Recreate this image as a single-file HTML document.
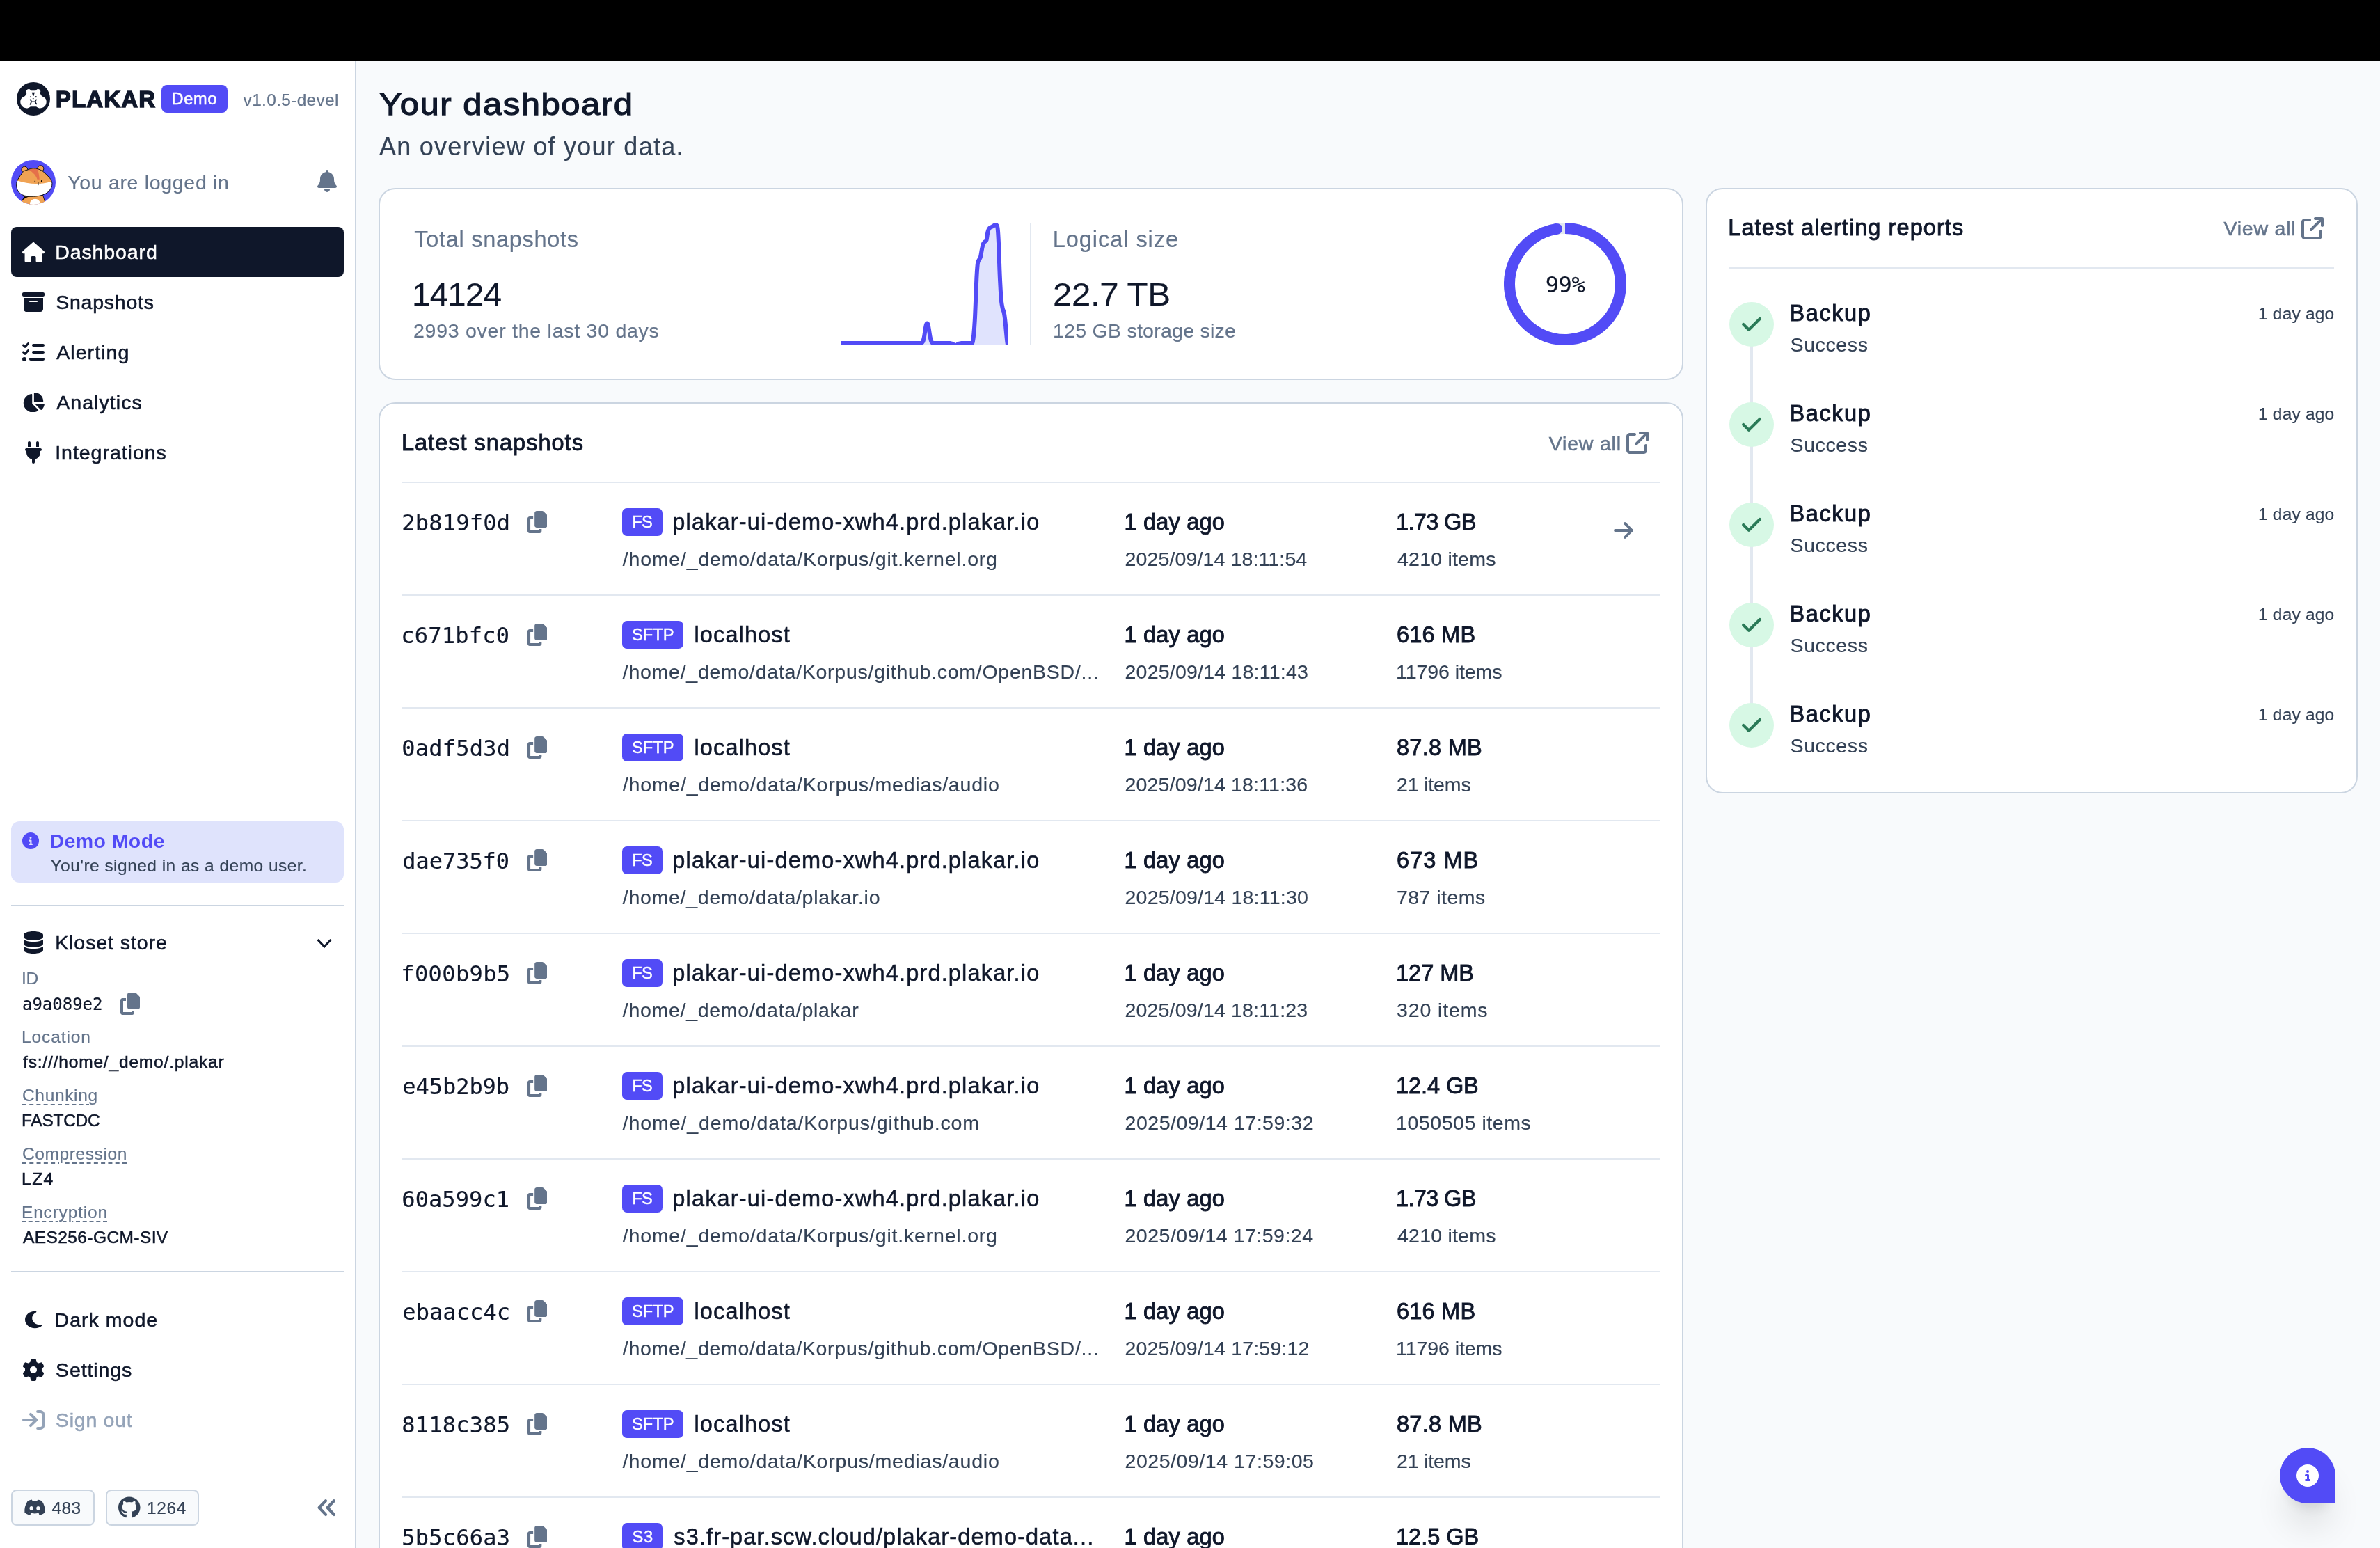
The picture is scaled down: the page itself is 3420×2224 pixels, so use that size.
<!DOCTYPE html>
<html lang="en"><head><meta charset="utf-8"><title>Plakar - Your dashboard</title>
<style>
*{margin:0;padding:0}
html,body{width:3420px;height:2224px;overflow:hidden}
body{position:relative;background:#f8fafc;font-family:"Liberation Sans", Arial, sans-serif;color:#0f172a}
.a{position:absolute;display:block}
aside,main{display:block;position:absolute;left:0;top:0;width:3420px;height:0;will-change:transform}
.t{position:absolute;display:block;white-space:nowrap;line-height:1;font-weight:400;text-decoration:none}
.m{font-family:"DejaVu Sans Mono", "Liberation Mono", monospace}
.dash{text-decoration:underline dashed #64748b 2px;text-underline-offset:5px}
@media (min-resolution:2dppx){html{zoom:.5}}
</style></head>
<body>
<div class="a" style="left:0;top:0;width:3420px;height:87px;background:#000"></div>
<div class="a" style="left:0;top:87px;width:3420px;height:1px;background:#fff"></div>
<aside>
<div class="a" style="left:0;top:87px;width:510px;height:2137px;background:#fff;border-right:2px solid #cbd5e1"></div>
<svg class="a" style="left:24px;top:118px" width="48" height="48" viewBox="0 0 48 48">
<circle cx="24" cy="24" r="24" fill="#0f172a"/>
<path fill="#fff" d="M14.6 15.6C13.3 14.4 13.4 12 15 10.8c1.600-1.200 3.700-.8 4.800.6.800 1 1.900.9 4.200.9s3.400.1 4.200-.9c1.100-1.400 3.200-1.800 4.800-.6 1.600 1.200 1.700 3.600.4 4.800.9 1.700 1.500 3.400 2.700 4.300 1.500 1 3.600 1.600 5.100 3.600 1.500 2 1.900 4.700 1.200 7.200-.8 3-3.200 5.600-6.400 6.400-2.600.7-5.100.1-6.900-1.200-.7-.5-1.300-.6-2.600-.6h-5c-1.300 0-1.900.1-2.600.6-1.800 1.300-4.300 1.900-6.900 1.200-3.200-.8-5.600-3.400-6.400-6.400-.7-2.500-.3-5.200 1.200-7.200 1.500-2 3.600-2.600 5.100-3.600 1.200-.9 1.800-2.600 2.700-4.300z"/>
<path fill="#0f172a" d="M21.800 14.700h4.100l-1.500 5.200h-1.100z"/>
<ellipse cx="20.100" cy="21.100" rx=".9" ry="1.200" fill="#0f172a"/><ellipse cx="27.800" cy="21.100" rx=".9" ry="1.200" fill="#0f172a"/>
<path fill="#0f172a" d="M22.500 23.200h2.600l-1.300 1.500z"/>
<path fill="none" stroke="#0f172a" stroke-width="1.600" stroke-linecap="round" d="M19.400 25.300c1.400.8 1.700 2.300 1.500 3.400-.2 1.300-1 2.500-1.500 3.200M28.300 25.300c-1.300.8-1.600 2.300-1.400 3.400.2 1.200.9 2.100 1.500 2.700M20.900 28.300h6"/>
</svg>
<div class="a" style="left:232px;top:122px;width:95px;height:40px;background:#524bf6;border-radius:8px;"></div>
<svg class="a" style="left:16px;top:230px" width="64" height="64" viewBox="0 0 64 64">
<defs><clipPath id="av"><circle cx="32" cy="32" r="32"/></clipPath><clipPath id="hd"><path d="M23.300 14.200c2.900-1.400 6-2.200 9-2.300 2.200-.1 4.300.3 6.200.9 2.300.7 4.400 1.500 6.200 2.700 2.400 1.800 4.600 3.900 6.700 6 2 2 3.900 3.600 5.200 5.700 1.300 2 2.200 4 2.300 6.200.1 2.200-.4 4.300-1.300 6.200-1 2.300-2.600 4.400-4.600 6.200-2.200 1.900-4.900 3.100-7.800 4.200-2.600.9-5.300 1.500-8.300 1.900-2.900.4-5.900.5-8.700.4-3-.1-6-.3-8.800-1.200-2.200-.7-4.100-1.700-5.700-2.800-2-1.500-3.600-3.400-4.600-5.700-.9-2.100-1.500-4.400-1.600-6.800 0-3 1.100-6 2.600-8.600 1.700-3 3.800-6 6.200-9.300 1.800-2 3.800-3.500 7-3.700z"/></clipPath></defs>
<g clip-path="url(#av)"><rect width="64" height="64" fill="#524bf6"/>
<path d="M15 59.500 19.500 52l10-.8 16-1.200 3.300 10.500V66H12z" fill="#f0a354" stroke="#000" stroke-width=".8"/>
<path d="M15.300 58.700 19 52.600l9.500-.6c-5 .6-10 3-13.200 6.700z" fill="#000"/>
<ellipse cx="34.400" cy="62.300" rx="7.400" ry="6.500" fill="#fff"/>
<circle cx="19.400" cy="13.700" r="4.400" fill="#f0a354" stroke="#000" stroke-width=".9"/>
<circle cx="42.400" cy="12.200" r="4.400" fill="#f0a354" stroke="#000" stroke-width=".9"/>
<path d="M23.300 14.200c2.900-1.400 6-2.200 9-2.300 2.200-.1 4.300.3 6.200.9 2.300.7 4.400 1.500 6.200 2.700 2.400 1.800 4.600 3.900 6.700 6 2 2 3.900 3.600 5.200 5.700 1.300 2 2.200 4 2.300 6.200.1 2.200-.4 4.300-1.300 6.200-1 2.300-2.600 4.400-4.600 6.200-2.200 1.900-4.900 3.100-7.800 4.200-2.600.9-5.300 1.500-8.300 1.900-2.900.4-5.900.5-8.700.4-3-.1-6-.3-8.800-1.200-2.200-.7-4.100-1.700-5.700-2.800-2-1.500-3.600-3.400-4.600-5.700-.9-2.100-1.500-4.400-1.600-6.800 0-3 1.100-6 2.600-8.600 1.700-3 3.800-6 6.200-9.300 1.800-2 3.800-3.500 7-3.700z" fill="#fff"/>
<g clip-path="url(#hd)"><path d="M0 0H64V28.500C57 31.500 49 33.300 41 33.800 30 34.500 19 32.800 8 29.200z" fill="#f0a354"/>
<path d="M25.600 14.200c4-1.600 8.400-1.800 12.400-1.400 1.400 4.900 2.400 9.900 2.800 14.900h-3.300c-1.300-5.200-5.900-10.100-11.900-13.500z" fill="#e5704a"/></g>
<path d="M23.300 14.200c2.900-1.400 6-2.200 9-2.300 2.200-.1 4.300.3 6.200.9 2.300.7 4.400 1.500 6.200 2.700 2.400 1.800 4.600 3.900 6.700 6 2 2 3.900 3.600 5.200 5.700 1.300 2 2.200 4 2.300 6.200.1 2.200-.4 4.300-1.300 6.200-1 2.300-2.600 4.400-4.600 6.200-2.200 1.900-4.900 3.100-7.800 4.200-2.600.9-5.300 1.500-8.300 1.900-2.900.4-5.900.5-8.700.4-3-.1-6-.3-8.800-1.200-2.200-.7-4.100-1.700-5.700-2.800-2-1.500-3.600-3.400-4.600-5.700-.9-2.100-1.500-4.400-1.600-6.800 0-3 1.100-6 2.600-8.600 1.700-3 3.800-6 6.200-9.300 1.800-2 3.800-3.500 7-3.700z" fill="none" stroke="#000" stroke-width=".9"/>
<ellipse cx="34.300" cy="30.700" rx=".75" ry="1.500" fill="#000"/><ellipse cx="43.700" cy="30.200" rx=".75" ry="1.500" fill="#000"/>
<path d="M38.600 31.400h1.700l-.8 1.100z" fill="#000"/><path d="M37.300 34.300c.8.300 1.600.4 2.500.3 1 0 1.800-.3 2.700-.6M39.700 32.500c0 1.300-.1 2.600-.6 3.700" fill="none" stroke="#000" stroke-width=".5"/>
</g></svg>
<svg class="a" style="left:456px;top:244px" width="28" height="32" viewBox="0 0 448 512" preserveAspectRatio="none"><path fill="#64748b" d="M224 0c-17.700 0-32 14.300-32 32V51.200C119 66 64 130.600 64 208v18.800c0 47-17.300 92.400-48.500 127.600l-7.400 8.300c-8.400 9.400-10.400 22.900-5.300 34.400S19.400 416 32 416H416c12.600 0 24-7.400 29.200-18.900s3.100-25-5.300-34.400l-7.400-8.300C401.300 319.200 384 273.900 384 226.800V208c0-77.400-55-142-128-156.800V32c0-17.700-14.300-32-32-32zm45.300 493.300c12-12 18.700-28.300 18.700-45.300H224 160c0 17 6.700 33.300 18.700 45.300s28.300 18.700 45.300 18.700s33.300-6.700 45.300-18.700z"/></svg>
<div class="a" style="left:16px;top:326px;width:478px;height:72px;background:#0f172a;border-radius:8px;"></div>
<svg class="a" style="left:32.0px;top:347.5px" width="32" height="29" viewBox="0 0 576 512" preserveAspectRatio="none"><path fill="#ffffff" d="M575.8 255.5c0 18-15 32.100-32 32.100h-32l.7 160.200c0 2.700-.2 5.400-.5 8.100V472c0 22.100-17.900 40-40 40H456c-1.100 0-2.200 0-3.300-.1c-1.400 .1-2.800 .1-4.200 .1H416 392c-22.100 0-40-17.900-40-40V448 384c0-17.700-14.300-32-32-32H256c-17.700 0-32 14.300-32 32v64 24c0 22.100-17.900 40-40 40H160 128.100c-1.500 0-3-.1-4.500-.2c-1.200 .1-2.400 .2-3.600 .2H104c-22.100 0-40-17.900-40-40V360c0-.9 0-1.900 .1-2.800V287.600H32c-18 0-32-14-32-32.100c0-9 3-17 10-24L266.400 8c7-7 15-8 22-8s15 2 21.100 7L564.800 231.500c8 7 12 15 11 24z"/></svg>
<svg class="a" style="left:32.0px;top:418.0px" width="32" height="32" viewBox="0 0 512 512" preserveAspectRatio="none"><path fill="#0f172a" d="M32 32H480c17.700 0 32 14.300 32 32V96c0 17.700-14.300 32-32 32H32C14.300 128 0 113.700 0 96V64C0 46.300 14.300 32 32 32zm0 128H480V416c0 35.300-28.700 64-64 64H96c-35.300 0-64-28.700-64-64V160zm128 80c0 8.800 7.200 16 16 16H336c8.800 0 16-7.200 16-16s-7.200-16-16-16H176c-8.800 0-16 7.200-16 16z"/></svg>
<svg class="a" style="left:32.0px;top:490.0px" width="32" height="32" viewBox="0 0 512 512" preserveAspectRatio="none"><path fill="#0f172a" d="M152.100 38.200c9.900 8.900 10.700 24 1.800 33.900l-72 80c-4.400 4.900-10.600 7.800-17.200 7.900s-12.900-2.400-17.600-7L7 113C-2.300 103.600-2.300 88.400 7 79s24.600-9.400 33.900 0l22.100 22.100 55.100-61.200c8.900-9.900 24-10.700 33.900-1.800zm0 160c9.900 8.900 10.700 24 1.800 33.900l-72 80c-4.400 4.900-10.600 7.800-17.200 7.900s-12.900-2.400-17.600-7L7 273c-9.400-9.400-9.400-24.600 0-33.900s24.600-9.400 33.900 0l22.100 22.100 55.100-61.200c8.900-9.900 24-10.700 33.900-1.800zM224 96c0-17.700 14.300-32 32-32H480c17.700 0 32 14.300 32 32s-14.300 32-32 32H256c-17.700 0-32-14.300-32-32zm0 160c0-17.700 14.300-32 32-32H480c17.700 0 32 14.300 32 32s-14.300 32-32 32H256c-17.700 0-32-14.300-32-32zM160 416c0-17.700 14.300-32 32-32H480c17.700 0 32 14.300 32 32s-14.300 32-32 32H192c-17.700 0-32-14.300-32-32zM48 368a48 48 0 1 1 0 96 48 48 0 1 1 0-96z"/></svg>
<svg class="a" style="left:32px;top:563.78px" width="32" height="28.44" viewBox="0 0 576 512" preserveAspectRatio="none"><path fill="#0f172a" d="M304 240V16.600c0-9 7-16.600 16-16.600C443.700 0 544 100.300 544 224c0 9-7.600 16-16.600 16H304zM32 272C32 150.700 122.100 50.300 239 34.300c9.200-1.300 17 6.100 17 15.400V288L412.500 444.500c6.700 6.700 6.200 17.700-1.500 23.100C371.800 495.600 323.800 512 272 512C139.500 512 32 404.600 32 272zm526.400 16c9.300 0 16.600 7.800 15.400 17c-7.700 55.900-34.600 105.600-73.900 142.300c-6 5.600-15.400 5.200-21.200-.7L320 288H558.400z"/></svg>
<svg class="a" style="left:36.0px;top:634.0px" width="24" height="32" viewBox="0 0 384 512" preserveAspectRatio="none"><path fill="#0f172a" d="M96 0C78.300 0 64 14.300 64 32v96h64V32c0-17.700-14.300-32-32-32zM288 0c-17.700 0-32 14.300-32 32v96h64V32c0-17.700-14.300-32-32-32zM32 160c-17.700 0-32 14.300-32 32s14.300 32 32 32v32c0 77.400 55 142 128 156.800V480c0 17.700 14.300 32 32 32s32-14.300 32-32V412.800C297 398 352 333.400 352 256V224c17.700 0 32-14.300 32-32s-14.300-32-32-32H32z"/></svg>
<div class="a" style="left:16px;top:1180px;width:478px;height:88px;background:#dfe3fc;border-radius:12px;"></div>
<svg class="a" style="left:32px;top:1196px" width="24" height="24" viewBox="0 0 512 512" preserveAspectRatio="none"><path fill="#524bf6" d="M256 512A256 256 0 1 0 256 0a256 256 0 1 0 0 512zM216 336h24V272H216c-13.300 0-24-10.700-24-24s10.700-24 24-24h48c13.300 0 24 10.700 24 24v88h8c13.300 0 24 10.700 24 24s-10.700 24-24 24H216c-13.300 0-24-10.700-24-24s10.700-24 24-24zm40-208a32 32 0 1 1 0 64 32 32 0 1 1 0-64z"/></svg>
<div class="a" style="left:16px;top:1300px;width:478px;height:2px;background:#cbd5e1;"></div>
<svg class="a" style="left:34px;top:1338px" width="28" height="32" viewBox="0 0 448 512" preserveAspectRatio="none"><path fill="#0f172a" d="M448 80v48c0 44.200-100.300 80-224 80S0 172.200 0 128V80C0 35.800 100.300 0 224 0S448 35.800 448 80zM393.200 214.700c20.800-7.400 39.900-16.900 54.800-28.600V288c0 44.200-100.300 80-224 80S0 332.200 0 288V186.100c14.900 11.800 34 21.200 54.800 28.600C99.700 230.700 159.500 240 224 240s124.300-9.300 169.200-25.300zM0 346.100c14.900 11.800 34 21.200 54.800 28.600C99.700 390.700 159.500 400 224 400s124.300-9.300 169.200-25.300c20.800-7.400 39.900-16.900 54.800-28.600V432c0 44.200-100.300 80-224 80S0 476.200 0 432V346.100z"/></svg>
<svg class="a" style="left:446px;top:1340px" width="40" height="30" viewBox="0 0 40 30" fill="none" stroke="#0f172a" stroke-width="3" stroke-linecap="butt" stroke-linejoin="miter"><path d="M10.500 10 20 20 29.500 10"/></svg>
<svg class="a" style="left:173px;top:1426px" width="28" height="32" viewBox="0 0 448 512" preserveAspectRatio="none"><path fill="#64748b" d="M208 0H332.100c12.700 0 24.900 5.100 33.900 14.100l67.900 67.900c9 9 14.100 21.200 14.100 33.900V336c0 26.500-21.500 48-48 48H208c-26.500 0-48-21.500-48-48V48c0-26.500 21.500-48 48-48zM48 128h80v64H64V448H256V416h64v48c0 26.500-21.500 48-48 48H48c-26.500 0-48-21.500-48-48V176c0-26.500 21.500-48 48-48z"/></svg>
<div class="a" style="left:16px;top:1826px;width:478px;height:2px;background:#cbd5e1;"></div>
<svg class="a" style="left:36px;top:1882px" width="24.5" height="28" viewBox="0 0 384 512" preserveAspectRatio="none"><path fill="#0f172a" d="M223.500 32C100 32 0 132.300 0 256S100 480 223.500 480c60.600 0 115.500-24.200 155.800-63.400c5-4.900 6.300-12.500 3.100-18.700s-10.100-9.700-17-8.500c-9.800 1.700-19.800 2.600-30.100 2.600c-96.900 0-175.500-78.800-175.500-176c0-65.800 36-123.100 89.300-153.300c6.100-3.500 9.200-10.500 7.700-17.300s-7.300-11.900-14.300-12.500c-6.300-.5-12.600-.8-19-.8z"/></svg>
<svg class="a" style="left:32px;top:1952px" width="32" height="32" viewBox="0 0 512 512" preserveAspectRatio="none"><path fill="#0f172a" d="M495.900 166.600c3.200 8.700 .5 18.400-6.400 24.600l-43.300 39.400c1.100 8.300 1.700 16.800 1.700 25.400s-.6 17.100-1.700 25.400l43.300 39.400c6.900 6.200 9.600 15.900 6.400 24.600c-4.400 11.900-9.700 23.300-15.800 34.300l-4.700 8.100c-6.600 11-14 21.400-22.100 31.200c-5.900 7.200-15.700 9.600-24.500 6.800l-55.700-17.700c-13.400 10.300-28.200 18.900-44 25.400l-12.500 57.100c-2 9.100-9 16.300-18.200 17.800c-13.800 2.300-28 3.500-42.500 3.500s-28.700-1.200-42.500-3.500c-9.200-1.500-16.200-8.700-18.200-17.800l-12.500-57.100c-15.800-6.500-30.600-15.100-44-25.400L83.100 425.900c-8.800 2.800-18.600 .3-24.500-6.800c-8.100-9.800-15.500-20.200-22.100-31.200l-4.700-8.100c-6.100-11-11.400-22.400-15.800-34.300c-3.200-8.700-.5-18.400 6.400-24.600l43.300-39.400C64.600 273.100 64 264.600 64 256s.6-17.100 1.700-25.400L22.400 191.200c-6.900-6.200-9.600-15.900-6.400-24.600c4.400-11.900 9.700-23.300 15.800-34.300l4.700-8.100c6.600-11 14-21.400 22.100-31.200c5.900-7.200 15.700-9.600 24.500-6.800l55.700 17.700c13.400-10.300 28.200-18.900 44-25.400l12.500-57.100c2-9.100 9-16.300 18.200-17.800C227.300 1.200 241.500 0 256 0s28.700 1.200 42.500 3.500c9.200 1.500 16.200 8.700 18.200 17.800l12.500 57.100c15.800 6.500 30.600 15.100 44 25.400l55.700-17.700c8.800-2.800 18.600-.3 24.500 6.800c8.100 9.800 15.500 20.200 22.100 31.200l4.700 8.100c6.100 11 11.400 22.400 15.800 34.300zM256 336a80 80 0 1 0 0-160 80 80 0 1 0 0 160z"/></svg>
<svg class="a" style="left:28px;top:2020px" width="40" height="40" viewBox="0 0 40 40" fill="none" stroke="#94a3b8" stroke-width="4" stroke-linecap="round" stroke-linejoin="round"><path d="M6 20H24.200"/><path d="M16 11.900 24.200 20 16 28.200"/><path d="M26.100 8H30.200a4 4 0 0 1 4 4V28a4 4 0 0 1-4 4H26.100"/></svg>
<div class="a" style="left:16px;top:2140px;width:120px;height:52px;background:#f8fafc;border-radius:8px;border:2px solid #cbd5e1;box-sizing:border-box;"></div>
<svg class="a" style="left:33.5px;top:2153px" width="32" height="25.6" viewBox="0 0 640 512" preserveAspectRatio="none"><path fill="#334155" d="M524.531,69.836a1.500,1.500,0,0,0-.764-.7A485.065,485.065,0,0,0,404.081,32.030a1.816,1.816,0,0,0-1.923.910,337.461,337.461,0,0,0-14.900,30.600,447.848,447.848,0,0,0-134.426,0,309.541,309.541,0,0,0-15.135-30.600,1.890,1.890,0,0,0-1.924-.910A483.689,483.689,0,0,0,116.085,69.137a1.712,1.712,0,0,0-.788.676C39.068,183.651,18.186,294.690,28.430,404.354a2.016,2.016,0,0,0,.765,1.375A487.666,487.666,0,0,0,176.020,479.918a1.900,1.900,0,0,0,2.063-.676A348.200,348.200,0,0,0,208.120,430.400a1.860,1.860,0,0,0-1.019-2.588,321.173,321.173,0,0,1-45.868-21.853,1.885,1.885,0,0,1-.185-3.126c3.082-2.309,6.166-4.711,9.109-7.137a1.819,1.819,0,0,1,1.900-.256c96.229,43.917,200.410,43.917,295.500,0a1.812,1.812,0,0,1,1.924.233c2.944,2.426,6.027,4.851,9.132,7.160a1.884,1.884,0,0,1-.162,3.126,301.407,301.407,0,0,1-45.890,21.830,1.875,1.875,0,0,0-1,2.611,391.055,391.055,0,0,0,30.014,48.815,1.864,1.864,0,0,0,2.063.7A486.048,486.048,0,0,0,610.700,405.729a1.882,1.882,0,0,0,.765-1.352C623.729,277.594,590.933,167.465,524.531,69.836ZM222.491,337.580c-28.972,0-52.844-26.587-52.844-59.239S193.056,219.100,222.491,219.100c29.665,0,53.306,26.820,52.843,59.239C275.334,310.993,251.924,337.580,222.491,337.580Zm195.380,0c-28.971,0-52.843-26.587-52.843-59.239S388.437,219.100,417.871,219.100c29.667,0,53.307,26.820,52.844,59.239C470.715,310.993,447.538,337.580,417.871,337.580Z"/></svg>
<div class="a" style="left:152px;top:2140px;width:134px;height:52px;background:#f8fafc;border-radius:8px;border:2px solid #cbd5e1;box-sizing:border-box;"></div>
<svg class="a" style="left:170px;top:2150px" width="31.5" height="31.5" viewBox="0 0 496 512" preserveAspectRatio="none"><path fill="#334155" d="M244.800 8C106.100 8 0 113.300 0 252c0 110.900 69.800 205.800 169.500 239.200 12.800 2.300 17.300-5.600 17.300-12.100 0-6.200-.3-40.400-.3-61.400 0 0-70 15-84.700-29.800 0 0-11.400-29.100-27.800-36.600 0 0-22.900-15.700 1.600-15.400 0 0 24.900 2 38.600 25.800 21.900 38.600 58.600 27.500 72.900 20.900 2.300-16 8.800-27.100 16-33.700-55.900-6.200-112.300-14.300-112.300-110.500 0-27.500 7.600-41.300 23.600-58.900-2.600-6.500-11.100-33.300 2.600-67.900 20.900-6.500 69 27 69 27 20-5.600 41.500-8.500 62.800-8.500s42.800 2.900 62.800 8.500c0 0 48.100-33.600 69-27 13.700 34.700 5.200 61.400 2.600 67.900 16 17.700 25.800 31.500 25.800 58.900 0 96.500-58.900 104.200-114.800 110.500 9.200 7.900 17 22.900 17 46.400 0 33.700-.3 75.400-.3 83.600 0 6.500 4.600 14.400 17.300 12.100C428.200 457.800 496 362.900 496 252 496 113.300 383.500 8 244.800 8z"/></svg>
<svg class="a" style="left:450px;top:2146px" width="40" height="40" viewBox="0 0 40 40" fill="none" stroke="#64748b" stroke-width="4.2" stroke-linecap="round" stroke-linejoin="round"><path d="M18 10.200 8.600 20 18 29.900"/><path d="M29.900 10.200 20.600 20 29.900 29.900"/></svg>
<div class="t" style="left:80.1px;top:126.7px;font-size:32.5px;color:#0f172a;letter-spacing:1.49px;font-weight:700;-webkit-text-stroke:1.6px;">PLAKAR</div>
<div class="t" style="left:246.5px;top:131px;font-size:23.5px;color:#ffffff;letter-spacing:0.79px;-webkit-text-stroke:0.55px;">Demo</div>
<div class="t" style="left:349.6px;top:132px;font-size:24.5px;color:#64748b;letter-spacing:0.31px;-webkit-text-stroke:0.2px;">v1.0.5-devel</div>
<div class="t" style="left:97.2px;top:247.8px;font-size:28.5px;color:#64748b;letter-spacing:0.68px;-webkit-text-stroke:0.2px;">You are logged in</div>
<a href="#" class="t" style="left:79.2px;top:348px;font-size:28.5px;color:#ffffff;letter-spacing:0.89px;-webkit-text-stroke:0.55px;">Dashboard</a>
<a href="#" class="t" style="left:80.2px;top:420px;font-size:28.5px;color:#0f172a;letter-spacing:0.77px;-webkit-text-stroke:0.55px;">Snapshots</a>
<a href="#" class="t" style="left:81.2px;top:492px;font-size:28.5px;color:#0f172a;letter-spacing:1.07px;-webkit-text-stroke:0.55px;">Alerting</a>
<a href="#" class="t" style="left:81.2px;top:564px;font-size:28.5px;color:#0f172a;letter-spacing:1.06px;-webkit-text-stroke:0.55px;">Analytics</a>
<a href="#" class="t" style="left:79.2px;top:636px;font-size:28.5px;color:#0f172a;letter-spacing:0.97px;-webkit-text-stroke:0.55px;">Integrations</a>
<div class="t" style="left:71.5px;top:1194.2px;font-size:28.5px;color:#524bf6;letter-spacing:0.42px;font-weight:700;">Demo Mode</div>
<div class="t" style="left:72.5px;top:1231.8px;font-size:24.5px;color:#334155;letter-spacing:0.47px;-webkit-text-stroke:0.2px;">You're signed in as a demo user.</div>
<div class="t" style="left:79.2px;top:1340.2px;font-size:28.5px;color:#0f172a;letter-spacing:0.92px;-webkit-text-stroke:0.55px;">Kloset store</div>
<div class="t" style="left:31px;top:1393.8px;font-size:24.5px;color:#64748b;letter-spacing:-0.31px;-webkit-text-stroke:0.2px;">ID</div>
<div class="t m" style="left:32px;top:1430.8px;font-size:24px;color:#0f172a;letter-spacing:-0.02px;-webkit-text-stroke:0.2px;">a9a089e2</div>
<div class="t" style="left:31px;top:1477.8px;font-size:24.5px;color:#64748b;letter-spacing:0.9px;-webkit-text-stroke:0.2px;">Location</div>
<div class="t" style="left:33px;top:1514px;font-size:24.5px;color:#0f172a;letter-spacing:0.83px;-webkit-text-stroke:0.55px;">fs:///home/_demo/.plakar</div>
<div class="t dash" style="left:32px;top:1561.8px;font-size:24.5px;color:#64748b;letter-spacing:0.66px;-webkit-text-stroke:0.2px;">Chunking</div>
<div class="t" style="left:31px;top:1598px;font-size:24.5px;color:#0f172a;letter-spacing:-0.27px;-webkit-text-stroke:0.55px;">FASTCDC</div>
<div class="t dash" style="left:32px;top:1645.8px;font-size:24.5px;color:#64748b;letter-spacing:0.6px;-webkit-text-stroke:0.2px;">Compression</div>
<div class="t" style="left:31px;top:1682px;font-size:24.5px;color:#0f172a;letter-spacing:1.5px;-webkit-text-stroke:0.55px;">LZ4</div>
<div class="t dash" style="left:31px;top:1729.8px;font-size:24.5px;color:#64748b;letter-spacing:0.81px;-webkit-text-stroke:0.2px;">Encryption</div>
<div class="t" style="left:33px;top:1766px;font-size:24.5px;color:#0f172a;letter-spacing:0.41px;-webkit-text-stroke:0.55px;">AES256-GCM-SIV</div>
<div class="t" style="left:78.6px;top:1882.2px;font-size:28.5px;color:#0f172a;letter-spacing:1.02px;-webkit-text-stroke:0.55px;">Dark mode</div>
<div class="t" style="left:80px;top:1954.2px;font-size:28.5px;color:#0f172a;letter-spacing:0.9px;-webkit-text-stroke:0.55px;">Settings</div>
<div class="t" style="left:80px;top:2026.2px;font-size:28.5px;color:#94a3b8;letter-spacing:0.73px;-webkit-text-stroke:0.55px;">Sign out</div>
<div class="t" style="left:74.4px;top:2155px;font-size:24.5px;color:#334155;letter-spacing:0.37px;-webkit-text-stroke:0.2px;">483</div>
<div class="t" style="left:211px;top:2155px;font-size:24.5px;color:#334155;letter-spacing:0.61px;-webkit-text-stroke:0.2px;">1264</div>
</aside>
<main>
<div class="a" style="left:544px;top:270px;width:1875px;height:276px;border-radius:24px;background:#fff;border:2px solid #cbd5e1;box-sizing:border-box;"></div>
<svg class="a" style="left:1208px;top:320px" width="240" height="176" viewBox="0 0 240 176"><path d="M0 173C17.5 173.0 86.7 173.0 105 173C123.3 173.0 108.7 173.0 110 173C111.3 173.0 112.1 173.0 113 173C113.9 173.0 114.7 173.3 115.5 173C116.3 172.7 117.3 172.3 118 171C118.7 169.7 119.2 167.8 119.8 165C120.4 162.2 121.0 157.1 121.5 154C122.0 150.9 122.5 148.1 123 146.5C123.5 144.9 123.9 144.5 124.3 144.5C124.7 144.5 125.1 144.9 125.6 146.5C126.0 148.1 126.5 150.9 127 154C127.5 157.1 128.2 162.2 128.8 165C129.4 167.8 129.8 169.7 130.5 171C131.2 172.3 132.2 172.7 133 173C133.8 173.3 134.5 173.0 135.5 173C136.5 173.0 137.4 173.0 139 173C140.6 173.0 143.2 173.0 145 173C146.8 173.0 148.5 173.0 150 173C151.5 173.0 152.8 173.0 154 173C155.2 173.0 155.8 172.8 157 173C158.2 173.2 159.7 173.3 161 174C162.3 174.7 163.7 177.0 165 177C166.3 177.0 167.6 174.7 169 174C170.4 173.3 172.2 173.2 173.5 173C174.8 172.8 175.6 173.0 177 173C178.4 173.0 180.5 173.0 182 173C183.5 173.0 185.0 173.0 186 173C187.0 173.0 187.4 173.2 188 173C188.6 172.8 189.1 173.7 189.7 171.5C190.2 169.3 190.8 165.2 191.3 160C191.8 154.8 192.3 148.7 192.8 140C193.3 131.3 193.7 118.8 194.2 108C194.7 97.2 195.1 83.3 195.6 75C196.1 66.7 196.4 61.7 197 58C197.6 54.3 198.3 54.5 199 53C199.7 51.5 200.3 51.5 201 49C201.7 46.5 202.3 41.2 203 38C203.7 34.8 204.3 31.8 205 30C205.7 28.2 206.2 28.3 207 27.5C207.8 26.7 208.8 27.4 209.5 25C210.2 22.6 210.8 15.9 211.5 13C212.2 10.1 213.1 8.7 214 7.5C214.9 6.3 216.1 6.5 217 6C217.9 5.5 218.6 5.0 219.5 4.5C220.4 4.0 221.4 3.2 222.3 3.2C223.2 3.2 224.2 3.0 224.8 4.5C225.4 6.0 225.6 7.1 226 12C226.4 16.9 226.8 24.7 227.2 34C227.6 43.3 228.0 57.8 228.4 68C228.8 78.2 229.3 87.5 229.7 95C230.1 102.5 230.5 108.3 231 113C231.5 117.7 232.1 120.3 232.7 123C233.3 125.7 234.1 126.3 234.7 129C235.3 131.7 235.7 134.7 236.2 139C236.7 143.3 237.2 149.8 237.7 155C238.2 160.2 238.7 166.2 239.2 170C239.7 173.8 240.3 176.7 240.5 178 L240.500 180 L0 180Z" fill="#e0e3fd"/><path d="M0 173C17.5 173.0 86.7 173.0 105 173C123.3 173.0 108.7 173.0 110 173C111.3 173.0 112.1 173.0 113 173C113.9 173.0 114.7 173.3 115.5 173C116.3 172.7 117.3 172.3 118 171C118.7 169.7 119.2 167.8 119.8 165C120.4 162.2 121.0 157.1 121.5 154C122.0 150.9 122.5 148.1 123 146.5C123.5 144.9 123.9 144.5 124.3 144.5C124.7 144.5 125.1 144.9 125.6 146.5C126.0 148.1 126.5 150.9 127 154C127.5 157.1 128.2 162.2 128.8 165C129.4 167.8 129.8 169.7 130.5 171C131.2 172.3 132.2 172.7 133 173C133.8 173.3 134.5 173.0 135.5 173C136.5 173.0 137.4 173.0 139 173C140.6 173.0 143.2 173.0 145 173C146.8 173.0 148.5 173.0 150 173C151.5 173.0 152.8 173.0 154 173C155.2 173.0 155.8 172.8 157 173C158.2 173.2 159.7 173.3 161 174C162.3 174.7 163.7 177.0 165 177C166.3 177.0 167.6 174.7 169 174C170.4 173.3 172.2 173.2 173.5 173C174.8 172.8 175.6 173.0 177 173C178.4 173.0 180.5 173.0 182 173C183.5 173.0 185.0 173.0 186 173C187.0 173.0 187.4 173.2 188 173C188.6 172.8 189.1 173.7 189.7 171.5C190.2 169.3 190.8 165.2 191.3 160C191.8 154.8 192.3 148.7 192.8 140C193.3 131.3 193.7 118.8 194.2 108C194.7 97.2 195.1 83.3 195.6 75C196.1 66.7 196.4 61.7 197 58C197.6 54.3 198.3 54.5 199 53C199.7 51.5 200.3 51.5 201 49C201.7 46.5 202.3 41.2 203 38C203.7 34.8 204.3 31.8 205 30C205.7 28.2 206.2 28.3 207 27.5C207.8 26.7 208.8 27.4 209.5 25C210.2 22.6 210.8 15.9 211.5 13C212.2 10.1 213.1 8.7 214 7.5C214.9 6.3 216.1 6.5 217 6C217.9 5.5 218.6 5.0 219.5 4.5C220.4 4.0 221.4 3.2 222.3 3.2C223.2 3.2 224.2 3.0 224.8 4.5C225.4 6.0 225.6 7.1 226 12C226.4 16.9 226.8 24.7 227.2 34C227.6 43.3 228.0 57.8 228.4 68C228.8 78.2 229.3 87.5 229.7 95C230.1 102.5 230.5 108.3 231 113C231.5 117.7 232.1 120.3 232.7 123C233.3 125.7 234.1 126.3 234.7 129C235.3 131.7 235.7 134.7 236.2 139C236.7 143.3 237.2 149.8 237.7 155C238.2 160.2 238.7 166.2 239.2 170C239.7 173.8 240.3 176.7 240.5 178" fill="none" stroke="#524bf6" stroke-width="6" stroke-linejoin="round"/></svg>
<div class="a" style="left:1480px;top:320px;width:2px;height:176px;background:#e2e8f0;"></div>
<svg class="a" style="left:2161px;top:320px" width="176" height="176" viewBox="0 0 176 176"><circle cx="88" cy="88" r="80" fill="none" stroke="#e2e8f0" stroke-width="16"/><path d="M88 8A80 80 0 1 1 76.04 8.90" fill="none" stroke="#524bf6" stroke-width="16"/><circle cx="76.04" cy="8.90" r="8" fill="#524bf6"/></svg>
<div class="a" style="left:544px;top:578px;width:1875px;height:1700px;border-radius:24px;background:#fff;border:2px solid #cbd5e1;box-sizing:border-box;"></div>
<svg class="a" style="left:2337px;top:620px" width="32" height="32" viewBox="0 0 512 512" preserveAspectRatio="none"><path fill="#64748b" d="M320 0c-17.700 0-32 14.300-32 32s14.300 32 32 32h82.700L201.400 265.400c-12.500 12.500-12.500 32.800 0 45.300s32.800 12.500 45.300 0L448 109.300V192c0 17.700 14.300 32 32 32s32-14.300 32-32V32c0-17.700-14.300-32-32-32H320zM80 32C35.800 32 0 67.800 0 112V432c0 44.200 35.800 80 80 80H400c44.200 0 80-35.800 80-80V320c0-17.700-14.300-32-32-32s-32 14.300-32 32V432c0 8.800-7.200 16-16 16H80c-8.800 0-16-7.200-16-16V112c0-8.800 7.200-16 16-16H192c17.700 0 32-14.300 32-32s-14.300-32-32-32H80z"/></svg>
<div class="a" style="left:578px;top:692px;width:1807px;height:2px;background:#e2e8f0;"></div>
<svg class="a" style="left:757.5px;top:734px" width="28.5" height="32" viewBox="0 0 448 512" preserveAspectRatio="none"><path fill="#64748b" d="M208 0H332.100c12.700 0 24.900 5.100 33.900 14.100l67.900 67.900c9 9 14.100 21.200 14.100 33.900V336c0 26.500-21.500 48-48 48H208c-26.500 0-48-21.500-48-48V48c0-26.500 21.500-48 48-48zM48 128h80v64H64V448H256V416h64v48c0 26.500-21.500 48-48 48H48c-26.500 0-48-21.500-48-48V176c0-26.500 21.500-48 48-48z"/></svg>
<div class="a" style="left:894px;top:730px;width:58px;height:40px;background:#524bf6;border-radius:7px;"></div>
<div class="a" style="left:578px;top:854px;width:1807px;height:2px;background:#e2e8f0;"></div>
<svg class="a" style="left:757.5px;top:896px" width="28.5" height="32" viewBox="0 0 448 512" preserveAspectRatio="none"><path fill="#64748b" d="M208 0H332.100c12.700 0 24.900 5.100 33.900 14.100l67.900 67.900c9 9 14.100 21.200 14.100 33.900V336c0 26.500-21.500 48-48 48H208c-26.500 0-48-21.500-48-48V48c0-26.500 21.500-48 48-48zM48 128h80v64H64V448H256V416h64v48c0 26.500-21.500 48-48 48H48c-26.500 0-48-21.500-48-48V176c0-26.500 21.500-48 48-48z"/></svg>
<div class="a" style="left:894px;top:892px;width:88px;height:40px;background:#524bf6;border-radius:7px;"></div>
<div class="a" style="left:578px;top:1016px;width:1807px;height:2px;background:#e2e8f0;"></div>
<svg class="a" style="left:757.5px;top:1058px" width="28.5" height="32" viewBox="0 0 448 512" preserveAspectRatio="none"><path fill="#64748b" d="M208 0H332.100c12.700 0 24.900 5.100 33.900 14.100l67.900 67.900c9 9 14.100 21.200 14.100 33.900V336c0 26.500-21.500 48-48 48H208c-26.500 0-48-21.500-48-48V48c0-26.500 21.500-48 48-48zM48 128h80v64H64V448H256V416h64v48c0 26.500-21.500 48-48 48H48c-26.500 0-48-21.500-48-48V176c0-26.500 21.500-48 48-48z"/></svg>
<div class="a" style="left:894px;top:1054px;width:88px;height:40px;background:#524bf6;border-radius:7px;"></div>
<div class="a" style="left:578px;top:1178px;width:1807px;height:2px;background:#e2e8f0;"></div>
<svg class="a" style="left:757.5px;top:1220px" width="28.5" height="32" viewBox="0 0 448 512" preserveAspectRatio="none"><path fill="#64748b" d="M208 0H332.100c12.700 0 24.900 5.100 33.900 14.100l67.900 67.900c9 9 14.100 21.200 14.100 33.900V336c0 26.500-21.500 48-48 48H208c-26.500 0-48-21.500-48-48V48c0-26.500 21.500-48 48-48zM48 128h80v64H64V448H256V416h64v48c0 26.500-21.500 48-48 48H48c-26.500 0-48-21.500-48-48V176c0-26.500 21.500-48 48-48z"/></svg>
<div class="a" style="left:894px;top:1216px;width:58px;height:40px;background:#524bf6;border-radius:7px;"></div>
<div class="a" style="left:578px;top:1340px;width:1807px;height:2px;background:#e2e8f0;"></div>
<svg class="a" style="left:757.5px;top:1382px" width="28.5" height="32" viewBox="0 0 448 512" preserveAspectRatio="none"><path fill="#64748b" d="M208 0H332.100c12.700 0 24.900 5.100 33.900 14.100l67.900 67.900c9 9 14.100 21.200 14.100 33.900V336c0 26.500-21.500 48-48 48H208c-26.500 0-48-21.500-48-48V48c0-26.500 21.500-48 48-48zM48 128h80v64H64V448H256V416h64v48c0 26.500-21.500 48-48 48H48c-26.500 0-48-21.500-48-48V176c0-26.500 21.500-48 48-48z"/></svg>
<div class="a" style="left:894px;top:1378px;width:58px;height:40px;background:#524bf6;border-radius:7px;"></div>
<div class="a" style="left:578px;top:1502px;width:1807px;height:2px;background:#e2e8f0;"></div>
<svg class="a" style="left:757.5px;top:1544px" width="28.5" height="32" viewBox="0 0 448 512" preserveAspectRatio="none"><path fill="#64748b" d="M208 0H332.100c12.700 0 24.900 5.100 33.900 14.100l67.900 67.900c9 9 14.100 21.200 14.100 33.900V336c0 26.500-21.500 48-48 48H208c-26.500 0-48-21.500-48-48V48c0-26.500 21.500-48 48-48zM48 128h80v64H64V448H256V416h64v48c0 26.500-21.500 48-48 48H48c-26.500 0-48-21.500-48-48V176c0-26.500 21.500-48 48-48z"/></svg>
<div class="a" style="left:894px;top:1540px;width:58px;height:40px;background:#524bf6;border-radius:7px;"></div>
<div class="a" style="left:578px;top:1664px;width:1807px;height:2px;background:#e2e8f0;"></div>
<svg class="a" style="left:757.5px;top:1706px" width="28.5" height="32" viewBox="0 0 448 512" preserveAspectRatio="none"><path fill="#64748b" d="M208 0H332.100c12.700 0 24.900 5.100 33.900 14.100l67.900 67.900c9 9 14.100 21.200 14.100 33.900V336c0 26.500-21.500 48-48 48H208c-26.500 0-48-21.500-48-48V48c0-26.500 21.500-48 48-48zM48 128h80v64H64V448H256V416h64v48c0 26.500-21.500 48-48 48H48c-26.500 0-48-21.500-48-48V176c0-26.500 21.500-48 48-48z"/></svg>
<div class="a" style="left:894px;top:1702px;width:58px;height:40px;background:#524bf6;border-radius:7px;"></div>
<div class="a" style="left:578px;top:1826px;width:1807px;height:2px;background:#e2e8f0;"></div>
<svg class="a" style="left:757.5px;top:1868px" width="28.5" height="32" viewBox="0 0 448 512" preserveAspectRatio="none"><path fill="#64748b" d="M208 0H332.100c12.700 0 24.900 5.100 33.900 14.100l67.900 67.900c9 9 14.100 21.200 14.100 33.900V336c0 26.500-21.500 48-48 48H208c-26.500 0-48-21.500-48-48V48c0-26.500 21.500-48 48-48zM48 128h80v64H64V448H256V416h64v48c0 26.500-21.500 48-48 48H48c-26.500 0-48-21.500-48-48V176c0-26.500 21.500-48 48-48z"/></svg>
<div class="a" style="left:894px;top:1864px;width:88px;height:40px;background:#524bf6;border-radius:7px;"></div>
<div class="a" style="left:578px;top:1988px;width:1807px;height:2px;background:#e2e8f0;"></div>
<svg class="a" style="left:757.5px;top:2030px" width="28.5" height="32" viewBox="0 0 448 512" preserveAspectRatio="none"><path fill="#64748b" d="M208 0H332.100c12.700 0 24.900 5.100 33.900 14.100l67.900 67.900c9 9 14.100 21.200 14.100 33.900V336c0 26.500-21.500 48-48 48H208c-26.500 0-48-21.500-48-48V48c0-26.500 21.500-48 48-48zM48 128h80v64H64V448H256V416h64v48c0 26.500-21.500 48-48 48H48c-26.500 0-48-21.500-48-48V176c0-26.500 21.500-48 48-48z"/></svg>
<div class="a" style="left:894px;top:2026px;width:88px;height:40px;background:#524bf6;border-radius:7px;"></div>
<div class="a" style="left:578px;top:2150px;width:1807px;height:2px;background:#e2e8f0;"></div>
<svg class="a" style="left:757.5px;top:2192px" width="28.5" height="32" viewBox="0 0 448 512" preserveAspectRatio="none"><path fill="#64748b" d="M208 0H332.100c12.700 0 24.900 5.100 33.900 14.100l67.900 67.900c9 9 14.100 21.200 14.100 33.900V336c0 26.500-21.500 48-48 48H208c-26.500 0-48-21.500-48-48V48c0-26.500 21.500-48 48-48zM48 128h80v64H64V448H256V416h64v48c0 26.500-21.500 48-48 48H48c-26.500 0-48-21.500-48-48V176c0-26.500 21.500-48 48-48z"/></svg>
<div class="a" style="left:894px;top:2188px;width:58px;height:40px;background:#524bf6;border-radius:7px;"></div>
<svg class="a" style="left:2313px;top:742px" width="40" height="40" viewBox="0 0 40 40" fill="none" stroke="#64748b" stroke-width="3.8" stroke-linecap="round" stroke-linejoin="round"><path d="M8 20H32"/><path d="M22 9.900 32 20 22 30"/></svg>
<div class="a" style="left:2451px;top:270px;width:937px;height:870px;border-radius:24px;background:#fff;border:2px solid #cbd5e1;box-sizing:border-box;"></div>
<svg class="a" style="left:3306.5px;top:312px" width="32" height="32" viewBox="0 0 512 512" preserveAspectRatio="none"><path fill="#64748b" d="M320 0c-17.700 0-32 14.300-32 32s14.300 32 32 32h82.700L201.400 265.400c-12.500 12.500-12.500 32.800 0 45.300s32.800 12.500 45.300 0L448 109.300V192c0 17.700 14.300 32 32 32s32-14.300 32-32V32c0-17.700-14.300-32-32-32H320zM80 32C35.800 32 0 67.800 0 112V432c0 44.200 35.800 80 80 80H400c44.200 0 80-35.800 80-80V320c0-17.700-14.300-32-32-32s-32 14.300-32 32V432c0 8.800-7.200 16-16 16H80c-8.800 0-16-7.200-16-16V112c0-8.800 7.200-16 16-16H192c17.700 0 32-14.300 32-32s-14.300-32-32-32H80z"/></svg>
<div class="a" style="left:2485px;top:384px;width:869px;height:2px;background:#e2e8f0;"></div>
<div class="a" style="left:2515px;top:466px;width:4px;height:576px;background:#e2e8f0;"></div>
<div class="a" style="left:2485px;top:434px;width:64px;height:64px;background:#d7f8e5;border-radius:32px;"></div>
<svg class="a" style="left:2497px;top:446px" width="40" height="40" viewBox="0 0 40 40" fill="none" stroke="#2a7a57" stroke-width="4.2" stroke-linecap="round" stroke-linejoin="round"><path d="M8.200 20 16 27.700 31.900 12.100"/></svg>
<div class="a" style="left:2485px;top:578px;width:64px;height:64px;background:#d7f8e5;border-radius:32px;"></div>
<svg class="a" style="left:2497px;top:590px" width="40" height="40" viewBox="0 0 40 40" fill="none" stroke="#2a7a57" stroke-width="4.2" stroke-linecap="round" stroke-linejoin="round"><path d="M8.200 20 16 27.700 31.900 12.100"/></svg>
<div class="a" style="left:2485px;top:722px;width:64px;height:64px;background:#d7f8e5;border-radius:32px;"></div>
<svg class="a" style="left:2497px;top:734px" width="40" height="40" viewBox="0 0 40 40" fill="none" stroke="#2a7a57" stroke-width="4.2" stroke-linecap="round" stroke-linejoin="round"><path d="M8.200 20 16 27.700 31.900 12.100"/></svg>
<div class="a" style="left:2485px;top:866px;width:64px;height:64px;background:#d7f8e5;border-radius:32px;"></div>
<svg class="a" style="left:2497px;top:878px" width="40" height="40" viewBox="0 0 40 40" fill="none" stroke="#2a7a57" stroke-width="4.2" stroke-linecap="round" stroke-linejoin="round"><path d="M8.200 20 16 27.700 31.900 12.100"/></svg>
<div class="a" style="left:2485px;top:1010px;width:64px;height:64px;background:#d7f8e5;border-radius:32px;"></div>
<svg class="a" style="left:2497px;top:1022px" width="40" height="40" viewBox="0 0 40 40" fill="none" stroke="#2a7a57" stroke-width="4.2" stroke-linecap="round" stroke-linejoin="round"><path d="M8.200 20 16 27.700 31.900 12.100"/></svg>
<div class="a" style="left:3276px;top:2080px;width:80px;height:80px;background:#524bf6;border-radius:40px 40px 0 40px;box-shadow:0 40px 50px -10px rgba(0,0,0,.12),0 16px 20px -12px rgba(0,0,0,.12);"></div>
<svg class="a" style="left:3300px;top:2104px" width="32" height="32" viewBox="0 0 512 512"><circle cx="256" cy="256" r="256" fill="#fff"/><path fill="#524bf6" d="M216 336h24V272H216c-13.300 0-24-10.700-24-24s10.700-24 24-24h48c13.300 0 24 10.700 24 24v88h8c13.300 0 24 10.700 24 24s-10.700 24-24 24H216c-13.300 0-24-10.700-24-24s10.700-24 24-24zm40-208a32 32 0 1 1 0 64 32 32 0 1 1 0-64z"/></svg>
<h1 class="t" style="left:545.4px;top:128.2px;font-size:44.5px;color:#0f172a;letter-spacing:1.4px;-webkit-text-stroke:1.25px;transform:scaleX(1.1);transform-origin:0 0;">Your dashboard</h1>
<p class="t" style="left:545px;top:193px;font-size:36px;color:#334155;letter-spacing:1.26px;-webkit-text-stroke:0.2px;">An overview of your data.</p>
<div class="t" style="left:595.2px;top:328px;font-size:32.5px;color:#64748b;letter-spacing:0.72px;-webkit-text-stroke:0.2px;">Total snapshots</div>
<div class="t" style="left:591.88px;top:401.3px;font-size:45.5px;color:#0f172a;letter-spacing:-0.63px;-webkit-text-stroke:0.2px;transform:scaleX(1.04);transform-origin:0 0;">14124</div>
<div class="t" style="left:594px;top:461.4px;font-size:28.5px;color:#64748b;letter-spacing:0.74px;-webkit-text-stroke:0.2px;">2993 over the last 30 days</div>
<div class="t" style="left:1512.8px;top:328px;font-size:32.5px;color:#64748b;letter-spacing:0.95px;-webkit-text-stroke:0.2px;">Logical size</div>
<div class="t" style="left:1512.64px;top:401.3px;font-size:45.5px;color:#0f172a;letter-spacing:-0.34px;-webkit-text-stroke:0.2px;transform:scaleX(1.08);transform-origin:0 0;">22.7 TB</div>
<div class="t" style="left:1513px;top:461.4px;font-size:28.5px;color:#64748b;letter-spacing:0.26px;-webkit-text-stroke:0.2px;">125 GB storage size</div>
<div class="t m" style="left:2220.7px;top:393.2px;font-size:32px;color:#0f172a;letter-spacing:-0.42px;-webkit-text-stroke:0.2px;">99%</div>
<h2 class="t" style="left:576.9px;top:619.8px;font-size:32.5px;color:#0f172a;letter-spacing:1.02px;-webkit-text-stroke:0.9px;">Latest snapshots</h2>
<a href="#" class="t" style="left:2225.8px;top:622.8px;font-size:28.5px;color:#64748b;letter-spacing:0.79px;-webkit-text-stroke:0.55px;">View all</a>
<div class="t m" style="left:577.3px;top:734.7px;font-size:32px;color:#0f172a;letter-spacing:0.23px;-webkit-text-stroke:0.2px;">2b819f0d</div>
<div class="t" style="left:908.3px;top:739.3px;font-size:23.7px;color:#ffffff;letter-spacing:-0.87px;-webkit-text-stroke:0.4px;">FS</div>
<div class="t" style="left:966.3px;top:733.5px;font-size:32.5px;color:#0f172a;letter-spacing:1.17px;-webkit-text-stroke:0.55px;">plakar-ui-demo-xwh4.prd.plakar.io</div>
<div class="t" style="left:894.8px;top:788.7px;font-size:28.5px;color:#334155;letter-spacing:0.8px;-webkit-text-stroke:0.2px;">/home/_demo/data/Korpus/git.kernel.org</div>
<div class="t" style="left:1615.5px;top:733.5px;font-size:32.5px;color:#0f172a;letter-spacing:0.19px;-webkit-text-stroke:0.9px;">1 day ago</div>
<div class="t" style="left:1616.5px;top:788.7px;font-size:28.5px;color:#334155;letter-spacing:0.13px;-webkit-text-stroke:0.2px;">2025/09/14 18:11:54</div>
<div class="t" style="left:2006px;top:733.5px;font-size:32.5px;color:#0f172a;letter-spacing:-0.64px;-webkit-text-stroke:0.9px;">1.73 GB</div>
<div class="t" style="left:2008px;top:788.7px;font-size:28.5px;color:#334155;letter-spacing:0.22px;-webkit-text-stroke:0.2px;">4210 items</div>
<div class="t m" style="left:576.3px;top:896.7px;font-size:32px;color:#0f172a;letter-spacing:0.23px;-webkit-text-stroke:0.2px;">c671bfc0</div>
<div class="t" style="left:908px;top:901.3px;font-size:23.7px;color:#ffffff;letter-spacing:-0.01px;-webkit-text-stroke:0.4px;">SFTP</div>
<div class="t" style="left:997.5px;top:895.5px;font-size:32.5px;color:#0f172a;letter-spacing:1.12px;-webkit-text-stroke:0.55px;">localhost</div>
<div class="t" style="left:894.8px;top:950.7px;font-size:28.5px;color:#334155;letter-spacing:0.73px;-webkit-text-stroke:0.2px;">/home/_demo/data/Korpus/github.com/OpenBSD/...</div>
<div class="t" style="left:1615.5px;top:895.5px;font-size:32.5px;color:#0f172a;letter-spacing:0.19px;-webkit-text-stroke:0.9px;">1 day ago</div>
<div class="t" style="left:1616.5px;top:950.7px;font-size:28.5px;color:#334155;letter-spacing:0.22px;-webkit-text-stroke:0.2px;">2025/09/14 18:11:43</div>
<div class="t" style="left:2007px;top:895.5px;font-size:32.5px;color:#0f172a;letter-spacing:0.21px;-webkit-text-stroke:0.9px;">616 MB</div>
<div class="t" style="left:2006px;top:950.7px;font-size:28.5px;color:#334155;letter-spacing:-0.06px;-webkit-text-stroke:0.2px;">11796 items</div>
<div class="t m" style="left:577.3px;top:1058.7px;font-size:32px;color:#0f172a;letter-spacing:0.23px;-webkit-text-stroke:0.2px;">0adf5d3d</div>
<div class="t" style="left:908px;top:1063.3px;font-size:23.7px;color:#ffffff;letter-spacing:-0.01px;-webkit-text-stroke:0.4px;">SFTP</div>
<div class="t" style="left:997.5px;top:1057.5px;font-size:32.5px;color:#0f172a;letter-spacing:1.12px;-webkit-text-stroke:0.55px;">localhost</div>
<div class="t" style="left:894.8px;top:1112.7px;font-size:28.5px;color:#334155;letter-spacing:0.79px;-webkit-text-stroke:0.2px;">/home/_demo/data/Korpus/medias/audio</div>
<div class="t" style="left:1615.5px;top:1057.5px;font-size:32.5px;color:#0f172a;letter-spacing:0.19px;-webkit-text-stroke:0.9px;">1 day ago</div>
<div class="t" style="left:1616.5px;top:1112.7px;font-size:28.5px;color:#334155;letter-spacing:0.18px;-webkit-text-stroke:0.2px;">2025/09/14 18:11:36</div>
<div class="t" style="left:2007px;top:1057.5px;font-size:32.5px;color:#0f172a;letter-spacing:0.29px;-webkit-text-stroke:0.9px;">87.8 MB</div>
<div class="t" style="left:2007px;top:1112.7px;font-size:28.5px;color:#334155;letter-spacing:-0.15px;-webkit-text-stroke:0.2px;">21 items</div>
<div class="t m" style="left:578.3px;top:1220.7px;font-size:32px;color:#0f172a;letter-spacing:-0.05px;-webkit-text-stroke:0.2px;">dae735f0</div>
<div class="t" style="left:908.3px;top:1225.3px;font-size:23.7px;color:#ffffff;letter-spacing:-0.87px;-webkit-text-stroke:0.4px;">FS</div>
<div class="t" style="left:966.3px;top:1219.5px;font-size:32.5px;color:#0f172a;letter-spacing:1.17px;-webkit-text-stroke:0.55px;">plakar-ui-demo-xwh4.prd.plakar.io</div>
<div class="t" style="left:894.8px;top:1274.7px;font-size:28.5px;color:#334155;letter-spacing:0.72px;-webkit-text-stroke:0.2px;">/home/_demo/data/plakar.io</div>
<div class="t" style="left:1615.5px;top:1219.5px;font-size:32.5px;color:#0f172a;letter-spacing:0.19px;-webkit-text-stroke:0.9px;">1 day ago</div>
<div class="t" style="left:1616.5px;top:1274.7px;font-size:28.5px;color:#334155;letter-spacing:0.22px;-webkit-text-stroke:0.2px;">2025/09/14 18:11:30</div>
<div class="t" style="left:2007px;top:1219.5px;font-size:32.5px;color:#0f172a;letter-spacing:1.05px;-webkit-text-stroke:0.9px;">673 MB</div>
<div class="t" style="left:2007px;top:1274.7px;font-size:28.5px;color:#334155;letter-spacing:0.46px;-webkit-text-stroke:0.2px;">787 items</div>
<div class="t m" style="left:576.3px;top:1382.7px;font-size:32px;color:#0f172a;letter-spacing:0.38px;-webkit-text-stroke:0.2px;">f000b9b5</div>
<div class="t" style="left:908.3px;top:1387.3px;font-size:23.7px;color:#ffffff;letter-spacing:-0.87px;-webkit-text-stroke:0.4px;">FS</div>
<div class="t" style="left:966.3px;top:1381.5px;font-size:32.5px;color:#0f172a;letter-spacing:1.17px;-webkit-text-stroke:0.55px;">plakar-ui-demo-xwh4.prd.plakar.io</div>
<div class="t" style="left:894.8px;top:1436.7px;font-size:28.5px;color:#334155;letter-spacing:0.71px;-webkit-text-stroke:0.2px;">/home/_demo/data/plakar</div>
<div class="t" style="left:1615.5px;top:1381.5px;font-size:32.5px;color:#0f172a;letter-spacing:0.19px;-webkit-text-stroke:0.9px;">1 day ago</div>
<div class="t" style="left:1616.5px;top:1436.7px;font-size:28.5px;color:#334155;letter-spacing:0.18px;-webkit-text-stroke:0.2px;">2025/09/14 18:11:23</div>
<div class="t" style="left:2006px;top:1381.5px;font-size:32.5px;color:#0f172a;letter-spacing:-0.01px;-webkit-text-stroke:0.9px;">127 MB</div>
<div class="t" style="left:2007px;top:1436.7px;font-size:28.5px;color:#334155;letter-spacing:0.87px;-webkit-text-stroke:0.2px;">320 items</div>
<div class="t m" style="left:578.3px;top:1544.7px;font-size:32px;color:#0f172a;letter-spacing:-0.05px;-webkit-text-stroke:0.2px;">e45b2b9b</div>
<div class="t" style="left:908.3px;top:1549.3px;font-size:23.7px;color:#ffffff;letter-spacing:-0.87px;-webkit-text-stroke:0.4px;">FS</div>
<div class="t" style="left:966.3px;top:1543.5px;font-size:32.5px;color:#0f172a;letter-spacing:1.17px;-webkit-text-stroke:0.55px;">plakar-ui-demo-xwh4.prd.plakar.io</div>
<div class="t" style="left:894.8px;top:1598.7px;font-size:28.5px;color:#334155;letter-spacing:0.88px;-webkit-text-stroke:0.2px;">/home/_demo/data/Korpus/github.com</div>
<div class="t" style="left:1615.5px;top:1543.5px;font-size:32.5px;color:#0f172a;letter-spacing:0.19px;-webkit-text-stroke:0.9px;">1 day ago</div>
<div class="t" style="left:1616.5px;top:1598.7px;font-size:28.5px;color:#334155;letter-spacing:0.53px;-webkit-text-stroke:0.2px;">2025/09/14 17:59:32</div>
<div class="t" style="left:2006px;top:1543.5px;font-size:32.5px;color:#0f172a;letter-spacing:-0.08px;-webkit-text-stroke:0.9px;">12.4 GB</div>
<div class="t" style="left:2006px;top:1598.7px;font-size:28.5px;color:#334155;letter-spacing:0.57px;-webkit-text-stroke:0.2px;">1050505 items</div>
<div class="t m" style="left:577.3px;top:1706.7px;font-size:32px;color:#0f172a;letter-spacing:0.09px;-webkit-text-stroke:0.2px;">60a599c1</div>
<div class="t" style="left:908.3px;top:1711.3px;font-size:23.7px;color:#ffffff;letter-spacing:-0.87px;-webkit-text-stroke:0.4px;">FS</div>
<div class="t" style="left:966.3px;top:1705.5px;font-size:32.5px;color:#0f172a;letter-spacing:1.17px;-webkit-text-stroke:0.55px;">plakar-ui-demo-xwh4.prd.plakar.io</div>
<div class="t" style="left:894.8px;top:1760.7px;font-size:28.5px;color:#334155;letter-spacing:0.8px;-webkit-text-stroke:0.2px;">/home/_demo/data/Korpus/git.kernel.org</div>
<div class="t" style="left:1615.5px;top:1705.5px;font-size:32.5px;color:#0f172a;letter-spacing:0.19px;-webkit-text-stroke:0.9px;">1 day ago</div>
<div class="t" style="left:1616.5px;top:1760.7px;font-size:28.5px;color:#334155;letter-spacing:0.5px;-webkit-text-stroke:0.2px;">2025/09/14 17:59:24</div>
<div class="t" style="left:2006px;top:1705.5px;font-size:32.5px;color:#0f172a;letter-spacing:-0.64px;-webkit-text-stroke:0.9px;">1.73 GB</div>
<div class="t" style="left:2008px;top:1760.7px;font-size:28.5px;color:#334155;letter-spacing:0.22px;-webkit-text-stroke:0.2px;">4210 items</div>
<div class="t m" style="left:578.3px;top:1868.7px;font-size:32px;color:#0f172a;letter-spacing:0.09px;-webkit-text-stroke:0.2px;">ebaacc4c</div>
<div class="t" style="left:908px;top:1873.3px;font-size:23.7px;color:#ffffff;letter-spacing:-0.01px;-webkit-text-stroke:0.4px;">SFTP</div>
<div class="t" style="left:997.5px;top:1867.5px;font-size:32.5px;color:#0f172a;letter-spacing:1.12px;-webkit-text-stroke:0.55px;">localhost</div>
<div class="t" style="left:894.8px;top:1922.7px;font-size:28.5px;color:#334155;letter-spacing:0.73px;-webkit-text-stroke:0.2px;">/home/_demo/data/Korpus/github.com/OpenBSD/...</div>
<div class="t" style="left:1615.5px;top:1867.5px;font-size:32.5px;color:#0f172a;letter-spacing:0.19px;-webkit-text-stroke:0.9px;">1 day ago</div>
<div class="t" style="left:1616.5px;top:1922.7px;font-size:28.5px;color:#334155;letter-spacing:0.19px;-webkit-text-stroke:0.2px;">2025/09/14 17:59:12</div>
<div class="t" style="left:2007px;top:1867.5px;font-size:32.5px;color:#0f172a;letter-spacing:0.21px;-webkit-text-stroke:0.9px;">616 MB</div>
<div class="t" style="left:2006px;top:1922.7px;font-size:28.5px;color:#334155;letter-spacing:-0.06px;-webkit-text-stroke:0.2px;">11796 items</div>
<div class="t m" style="left:577.3px;top:2030.7px;font-size:32px;color:#0f172a;letter-spacing:0.23px;-webkit-text-stroke:0.2px;">8118c385</div>
<div class="t" style="left:908px;top:2035.3px;font-size:23.7px;color:#ffffff;letter-spacing:-0.01px;-webkit-text-stroke:0.4px;">SFTP</div>
<div class="t" style="left:997.5px;top:2029.5px;font-size:32.5px;color:#0f172a;letter-spacing:1.12px;-webkit-text-stroke:0.55px;">localhost</div>
<div class="t" style="left:894.8px;top:2084.7px;font-size:28.5px;color:#334155;letter-spacing:0.79px;-webkit-text-stroke:0.2px;">/home/_demo/data/Korpus/medias/audio</div>
<div class="t" style="left:1615.5px;top:2029.5px;font-size:32.5px;color:#0f172a;letter-spacing:0.19px;-webkit-text-stroke:0.9px;">1 day ago</div>
<div class="t" style="left:1616.5px;top:2084.7px;font-size:28.5px;color:#334155;letter-spacing:0.55px;-webkit-text-stroke:0.2px;">2025/09/14 17:59:05</div>
<div class="t" style="left:2007px;top:2029.5px;font-size:32.5px;color:#0f172a;letter-spacing:0.29px;-webkit-text-stroke:0.9px;">87.8 MB</div>
<div class="t" style="left:2007px;top:2084.7px;font-size:28.5px;color:#334155;letter-spacing:-0.15px;-webkit-text-stroke:0.2px;">21 items</div>
<div class="t m" style="left:577.3px;top:2192.7px;font-size:32px;color:#0f172a;letter-spacing:0.23px;-webkit-text-stroke:0.2px;">5b5c66a3</div>
<div class="t" style="left:908.5px;top:2197.3px;font-size:23.7px;color:#ffffff;letter-spacing:0.7px;-webkit-text-stroke:0.4px;">S3</div>
<div class="t" style="left:968.3px;top:2191.5px;font-size:32.5px;color:#0f172a;letter-spacing:1.13px;-webkit-text-stroke:0.55px;">s3.fr-par.scw.cloud/plakar-demo-data...</div>
<div class="t" style="left:894.8px;top:2246.7px;font-size:28.5px;color:#334155;letter-spacing:0.8px;-webkit-text-stroke:0.2px;">/plakar-demo-data</div>
<div class="t" style="left:1615.5px;top:2191.5px;font-size:32.5px;color:#0f172a;letter-spacing:0.19px;-webkit-text-stroke:0.9px;">1 day ago</div>
<div class="t" style="left:1616.5px;top:2246.7px;font-size:28.5px;color:#334155;letter-spacing:0.3px;-webkit-text-stroke:0.2px;">2025/09/14 17:58:51</div>
<div class="t" style="left:2006px;top:2191.5px;font-size:32.5px;color:#0f172a;letter-spacing:-0.01px;-webkit-text-stroke:0.9px;">12.5 GB</div>
<div class="t" style="left:2006px;top:2246.7px;font-size:28.5px;color:#334155;letter-spacing:0.57px;-webkit-text-stroke:0.2px;">1050505 items</div>
<h2 class="t" style="left:2483.3px;top:311.2px;font-size:32.5px;color:#0f172a;letter-spacing:1.07px;-webkit-text-stroke:0.9px;">Latest alerting reports</h2>
<a href="#" class="t" style="left:3195.4px;top:314.2px;font-size:28.5px;color:#64748b;letter-spacing:0.79px;-webkit-text-stroke:0.55px;">View all</a>
<div class="t" style="left:2571.5px;top:433.9px;font-size:32.5px;color:#0f172a;letter-spacing:1.57px;-webkit-text-stroke:0.9px;">Backup</div>
<div class="t" style="left:2572.5px;top:480.6px;font-size:28.5px;color:#334155;letter-spacing:0.62px;-webkit-text-stroke:0.2px;">Success</div>
<div class="t" style="left:3245px;top:438.8px;font-size:24.5px;color:#334155;letter-spacing:0.19px;-webkit-text-stroke:0.2px;">1 day ago</div>
<div class="t" style="left:2571.5px;top:577.9px;font-size:32.5px;color:#0f172a;letter-spacing:1.57px;-webkit-text-stroke:0.9px;">Backup</div>
<div class="t" style="left:2572.5px;top:624.6px;font-size:28.5px;color:#334155;letter-spacing:0.62px;-webkit-text-stroke:0.2px;">Success</div>
<div class="t" style="left:3245px;top:582.8px;font-size:24.5px;color:#334155;letter-spacing:0.19px;-webkit-text-stroke:0.2px;">1 day ago</div>
<div class="t" style="left:2571.5px;top:721.9px;font-size:32.5px;color:#0f172a;letter-spacing:1.57px;-webkit-text-stroke:0.9px;">Backup</div>
<div class="t" style="left:2572.5px;top:768.6px;font-size:28.5px;color:#334155;letter-spacing:0.62px;-webkit-text-stroke:0.2px;">Success</div>
<div class="t" style="left:3245px;top:726.8px;font-size:24.5px;color:#334155;letter-spacing:0.19px;-webkit-text-stroke:0.2px;">1 day ago</div>
<div class="t" style="left:2571.5px;top:865.9px;font-size:32.5px;color:#0f172a;letter-spacing:1.57px;-webkit-text-stroke:0.9px;">Backup</div>
<div class="t" style="left:2572.5px;top:912.6px;font-size:28.5px;color:#334155;letter-spacing:0.62px;-webkit-text-stroke:0.2px;">Success</div>
<div class="t" style="left:3245px;top:870.8px;font-size:24.5px;color:#334155;letter-spacing:0.19px;-webkit-text-stroke:0.2px;">1 day ago</div>
<div class="t" style="left:2571.5px;top:1009.9px;font-size:32.5px;color:#0f172a;letter-spacing:1.57px;-webkit-text-stroke:0.9px;">Backup</div>
<div class="t" style="left:2572.5px;top:1056.6px;font-size:28.5px;color:#334155;letter-spacing:0.62px;-webkit-text-stroke:0.2px;">Success</div>
<div class="t" style="left:3245px;top:1014.8px;font-size:24.5px;color:#334155;letter-spacing:0.19px;-webkit-text-stroke:0.2px;">1 day ago</div>
</main>
</body></html>
